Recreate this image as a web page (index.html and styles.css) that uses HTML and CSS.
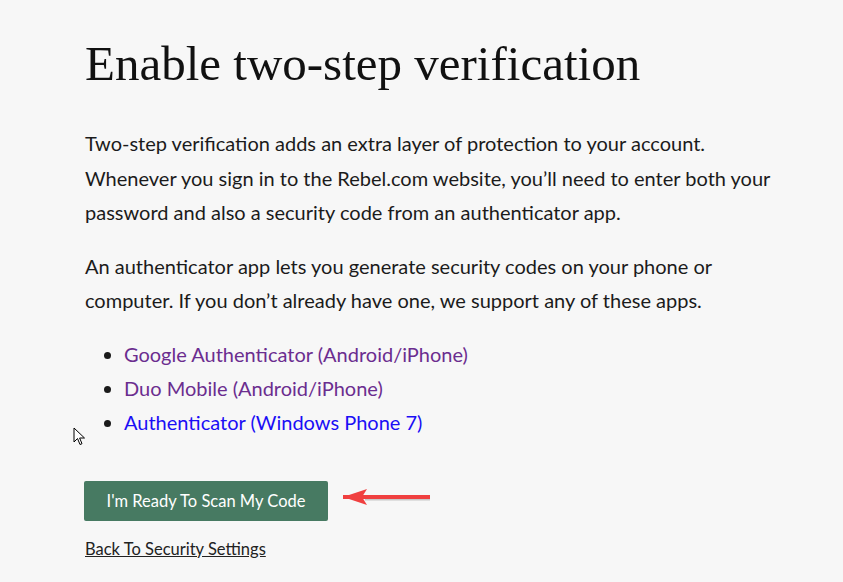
FILE: index.html
```html
<!DOCTYPE html>
<html>
<head>
<meta charset="utf-8">
<link rel="stylesheet" href="styles.css">
</head>
<body>
<main class="page">
  <h1 class="title">Enable two-step verification</h1>
  <p class="text">Two-step verification adds an extra layer of protection to your account. Whenever you sign in to the Rebel.com website, you’ll need to enter both your password and also a security code from an authenticator app.</p>
  <p class="text">An authenticator app lets you generate security codes on your phone or computer. If you don’t already have one, we support any of these apps.</p>
  <ul class="apps">
    <li><a class="link visited" href="#">Google Authenticator (Android/iPhone)</a></li>
    <li><a class="link visited" href="#">Duo Mobile (Android/iPhone)</a></li>
    <li><a class="link fresh" href="#">Authenticator (Windows Phone 7)</a></li>
  </ul>
  <div class="actions">
    <button class="btn">I'm Ready To Scan My Code</button>
    <svg class="arrow" width="90" height="20" viewBox="0 0 90 20">
      <path d="M22 10.5 H87" stroke="#9a9a9a" stroke-opacity="0.5" stroke-width="4" fill="none"/>
      <path d="M0 9 H87" stroke="#f04040" stroke-width="4" fill="none"/>
      <path d="M0 9 L24 1 L19 9 L24 17 Z" fill="#f04040"/>
    </svg>
  </div>
  <a class="back" href="#">Back To Security Settings</a>
</main>
<svg class="cursor" width="14" height="20" viewBox="0 0 14 20">
  <path d="M1 1 L1 15 L4.5 11.5 L7 17.5 L9 16.7 L6.6 11 L11.5 11 Z" fill="#fff" stroke="#000" stroke-width="1"/>
</svg>
</body>
</html>
```
FILE: styles.css
```css
html, body {
  margin: 0;
  padding: 0;
  background: #f7f7f7;
}
body {
  font-family: "Lato", "Open Sans", sans-serif;
  color: #1b1b1b;
  position: relative;
  min-height: 582px;
}
.page {
  padding: 34px 0 0 85px;
  width: 705px;
}
.title {
  font-family: "Liberation Serif", "DejaVu Serif", serif;
  font-weight: 400;
  font-size: 49px;
  line-height: 60px;
  margin: 0 0 32px;
  color: #111;
}
.text {
  font-size: 20px;
  line-height: 34.5px;
  margin: 0 0 19px;
}
.apps {
  margin: 0;
  padding: 0 0 0 39px;
  font-size: 20px;
  line-height: 34px;
}
.link { text-decoration: none; }
.visited { color: #6b2d8f; }
.fresh { color: #1a0ef5; }
.actions {
  display: flex;
  align-items: center;
  gap: 15px;
  margin-top: 42px;
}
.btn {
  background: #477a62;
  color: #fff;
  border: none;
  border-radius: 2px;
  font-family: inherit;
  font-size: 16.5px;
  width: 244px;
  height: 40px;
  padding: 0;
  margin-left: -1px;
}
.arrow {
  display: block;
  margin-bottom: 5px;
}
.back {
  display: inline-block;
  margin-top: 18px;
  font-size: 16.5px;
  color: #222;
  text-decoration: underline;
}
.cursor {
  position: absolute;
  left: 73px;
  top: 427px;
}
```
